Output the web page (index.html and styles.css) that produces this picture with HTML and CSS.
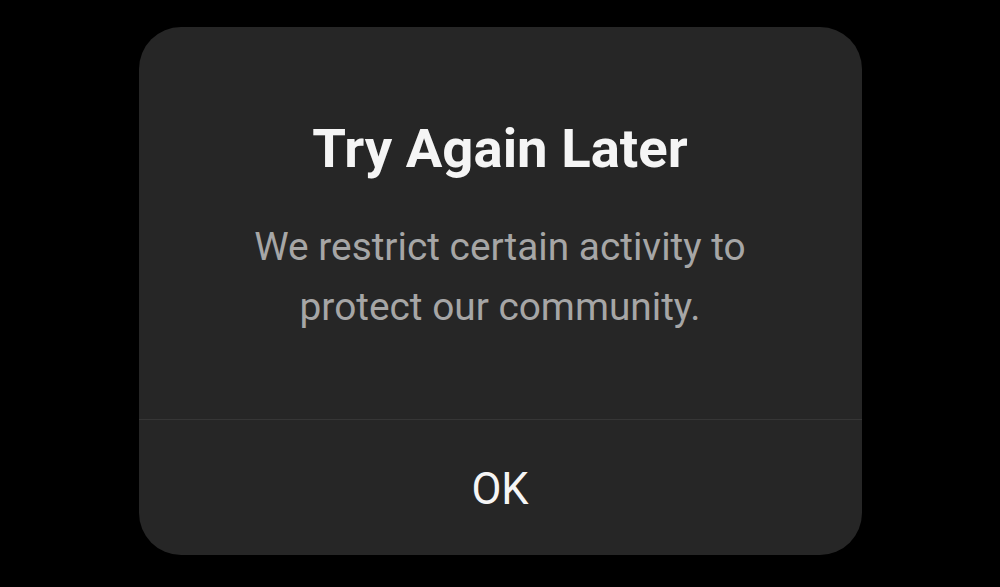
FILE: index.html
```html
<!DOCTYPE html>
<html>
<head>
<meta charset="utf-8">
<link rel="stylesheet" href="styles.css">
</head>
<body>
<div class="page">
  <div class="dialog">
    <div class="content">
      <h1 class="title">Try Again Later</h1>
      <p class="message">We restrict certain activity to<br>protect our community.</p>
    </div>
    <div class="actions">
      <button class="ok">OK</button>
    </div>
  </div>
</div>
</body>
</html>
```

FILE: styles.css
```css
html, body {
  margin: 0;
  padding: 0;
  background: #000;
  height: 100%;
}
.page {
  display: flex;
  justify-content: center;
  padding-top: 27px;
  font-family: Roboto, "Noto Sans", sans-serif;
}
.dialog {
  width: 723px;
  height: 528px;
  background: #262626;
  border-radius: 42px;
  display: flex;
  flex-direction: column;
  overflow: hidden;
}
.content {
  height: 393px;
  box-sizing: border-box;
  padding-top: 88px;
  text-align: center;
  border-bottom: 1px solid #363636;
}
.title {
  margin: 0;
  font-size: 54.5px;
  line-height: 66px;
  font-weight: 700;
  color: #f5f5f5;
}
.message {
  margin: 36px 0 0;
  font-size: 38.8px;
  line-height: 60px;
  color: #a6a6a6;
}
.actions {
  flex: 1;
  display: flex;
  align-items: center;
  justify-content: center;
  padding-top: 3px;
}
.ok {
  background: none;
  border: none;
  padding: 0;
  font-family: Roboto, "Noto Sans", sans-serif;
  font-size: 43.5px;
  color: #f5f5f5;
}
```
